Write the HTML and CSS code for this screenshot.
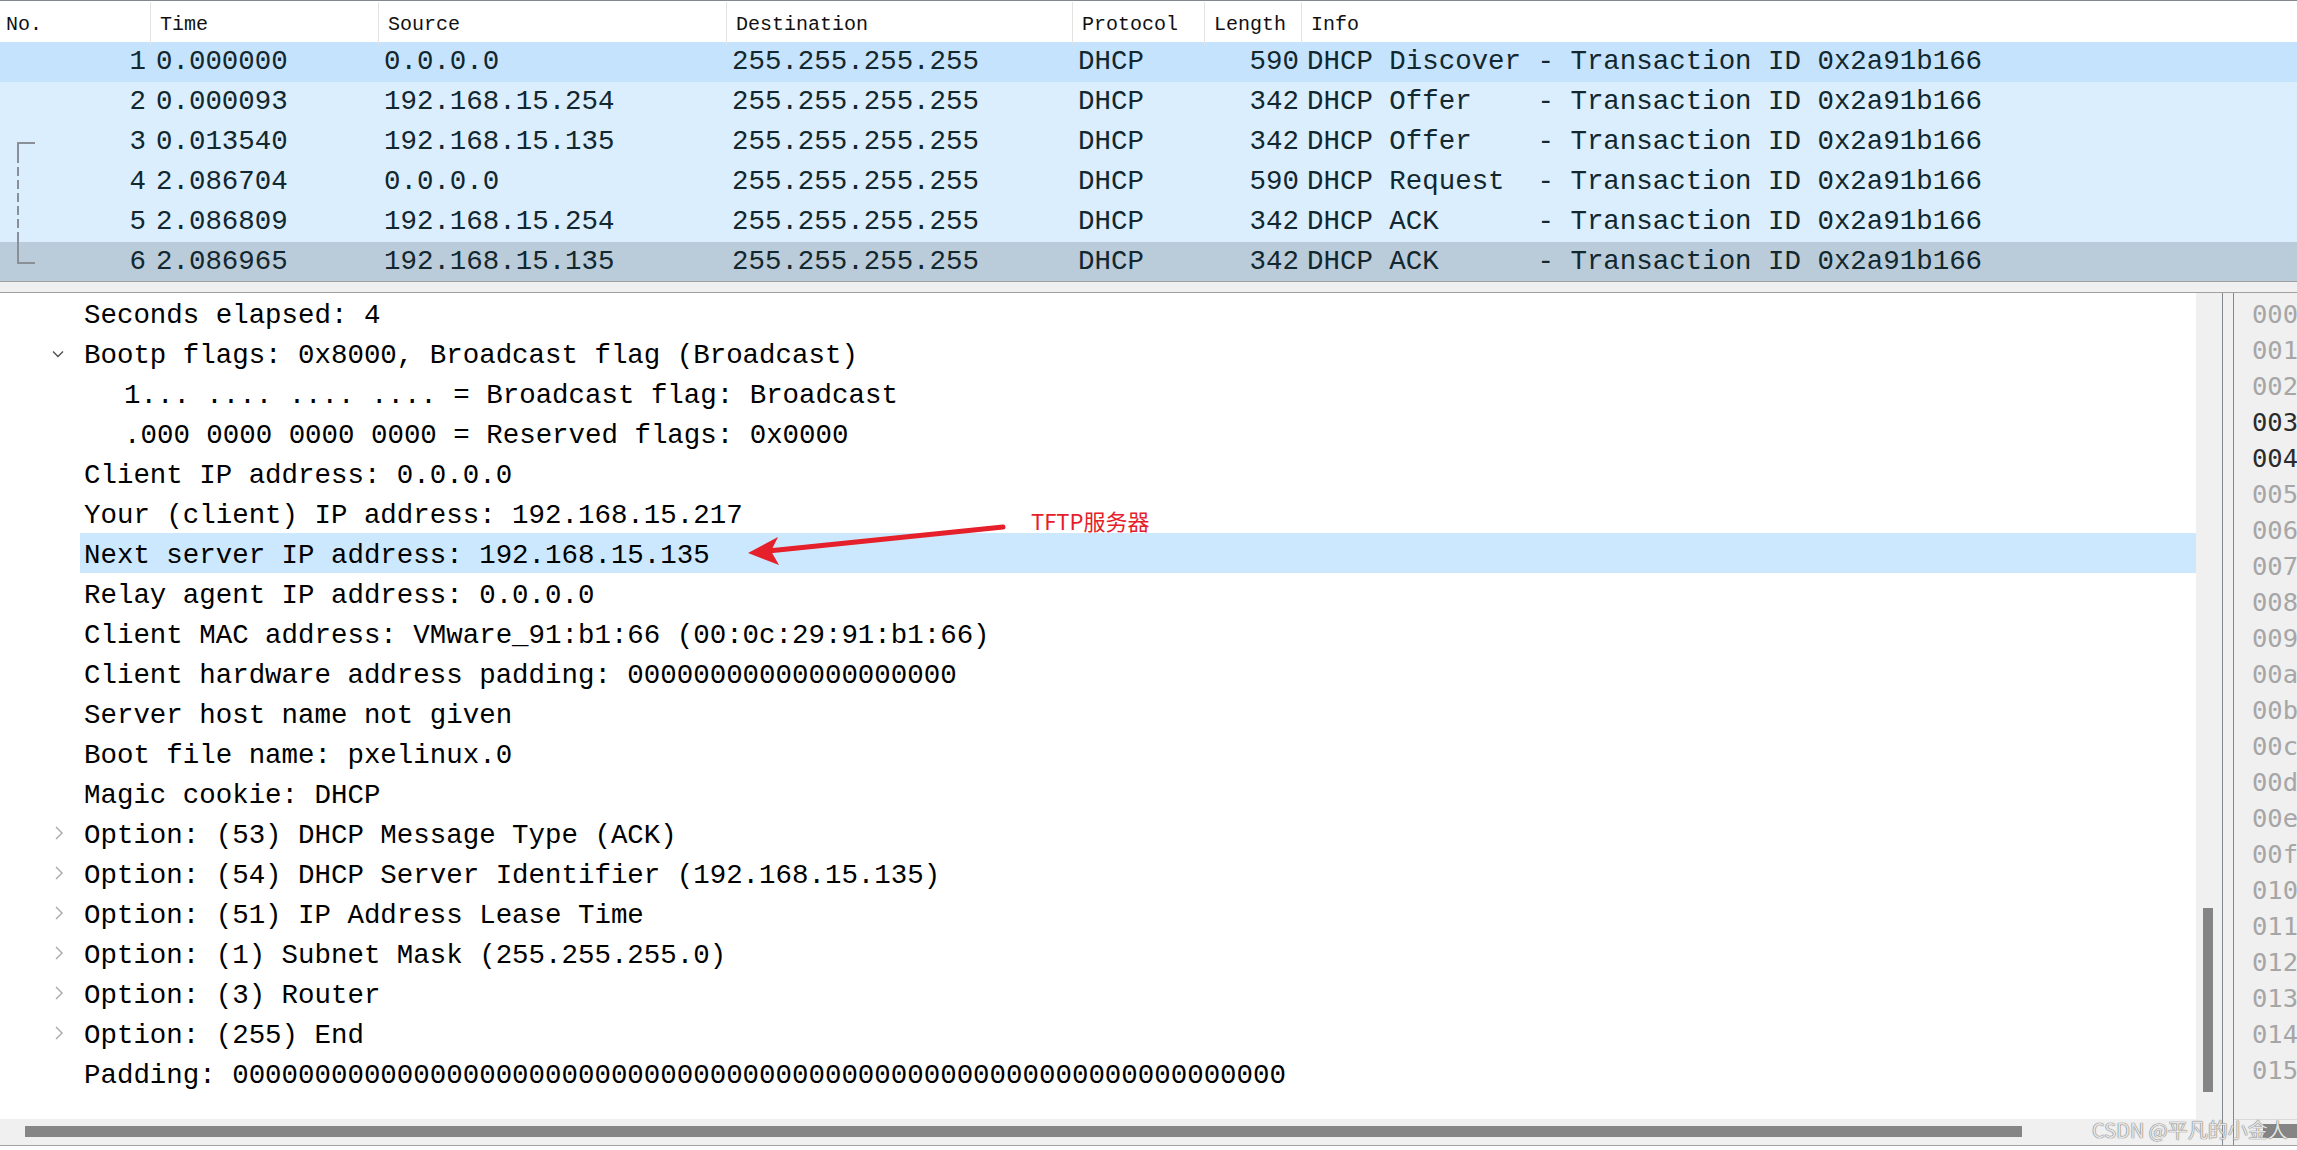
FILE: index.html
```html
<!DOCTYPE html>
<html>
<head>
<meta charset="utf-8">
<title>Wireshark DHCP</title>
<link rel="stylesheet" href="styles.css">
</head>
<body>
<div class="plist">
  <div class="phead">
    <div class="hc">No.</div>
    <div class="hc">Time</div>
    <div class="hc">Source</div>
    <div class="hc">Destination</div>
    <div class="hc">Protocol</div>
    <div class="hc">Length</div>
    <div class="hc last">Info</div>
  </div>
  <div class="prow hover">
    <div class="c r">1</div><div class="c">0.000000</div><div class="c">0.0.0.0</div><div class="c">255.255.255.255</div><div class="c">DHCP</div><div class="c rr">590</div><div class="c">DHCP Discover - Transaction ID 0x2a91b166</div>
  </div>
  <div class="prow">
    <div class="c r">2</div><div class="c">0.000093</div><div class="c">192.168.15.254</div><div class="c">255.255.255.255</div><div class="c">DHCP</div><div class="c rr">342</div><div class="c">DHCP Offer    - Transaction ID 0x2a91b166</div>
  </div>
  <div class="prow">
    <div class="c r">3</div><div class="c">0.013540</div><div class="c">192.168.15.135</div><div class="c">255.255.255.255</div><div class="c">DHCP</div><div class="c rr">342</div><div class="c">DHCP Offer    - Transaction ID 0x2a91b166</div>
  </div>
  <div class="prow">
    <div class="c r">4</div><div class="c">2.086704</div><div class="c">0.0.0.0</div><div class="c">255.255.255.255</div><div class="c">DHCP</div><div class="c rr">590</div><div class="c">DHCP Request  - Transaction ID 0x2a91b166</div>
  </div>
  <div class="prow">
    <div class="c r">5</div><div class="c">2.086809</div><div class="c">192.168.15.254</div><div class="c">255.255.255.255</div><div class="c">DHCP</div><div class="c rr">342</div><div class="c">DHCP ACK      - Transaction ID 0x2a91b166</div>
  </div>
  <div class="prow selected">
    <div class="c r">6</div><div class="c">2.086965</div><div class="c">192.168.15.135</div><div class="c">255.255.255.255</div><div class="c">DHCP</div><div class="c rr">342</div><div class="c">DHCP ACK      - Transaction ID 0x2a91b166</div>
  </div>
  <svg class="bracket" width="40" height="130" viewBox="0 0 40 130">
    <path d="M35 1 H18 V12" fill="none" stroke="#8b9096" stroke-width="2"/>
    <path d="M18 12 V98" fill="none" stroke="#8b9096" stroke-width="2" stroke-dasharray="9 4"/>
    <path d="M18 96 V121 H35" fill="none" stroke="#8b9096" stroke-width="2"/>
  </svg>
</div>
<div class="hsplit"></div>
<div class="bottom">
  <div class="dpane">
    <div class="dmain">
      <div class="tree">
        <div class="trow"><div class="branch"></div><div class="label">Seconds elapsed: 4</div></div>
        <div class="trow"><div class="branch"><svg class="chev-d" width="12" height="8" viewBox="0 0 12 8"><path d="M1 1.5 L6 6.5 L11 1.5" fill="none" stroke="#505050" stroke-width="1.4"/></svg></div><div class="label">Bootp flags: 0x8000, Broadcast flag (Broadcast)</div></div>
        <div class="trow"><div class="branch deep"></div><div class="label">1... .... .... .... = Broadcast flag: Broadcast</div></div>
        <div class="trow"><div class="branch deep"></div><div class="label">.000 0000 0000 0000 = Reserved flags: 0x0000</div></div>
        <div class="trow"><div class="branch"></div><div class="label">Client IP address: 0.0.0.0</div></div>
        <div class="trow"><div class="branch"></div><div class="label">Your (client) IP address: 192.168.15.217</div></div>
        <div class="trow"><div class="branch"></div><div class="label sel">Next server IP address: 192.168.15.135</div></div>
        <div class="trow"><div class="branch"></div><div class="label">Relay agent IP address: 0.0.0.0</div></div>
        <div class="trow"><div class="branch"></div><div class="label">Client MAC address: VMware_91:b1:66 (00:0c:29:91:b1:66)</div></div>
        <div class="trow"><div class="branch"></div><div class="label">Client hardware address padding: 00000000000000000000</div></div>
        <div class="trow"><div class="branch"></div><div class="label">Server host name not given</div></div>
        <div class="trow"><div class="branch"></div><div class="label">Boot file name: pxelinux.0</div></div>
        <div class="trow"><div class="branch"></div><div class="label">Magic cookie: DHCP</div></div>
        <div class="trow"><div class="branch"><svg class="chev-r" width="8" height="14" viewBox="0 0 8 14"><path d="M1 1 L7 7 L1 13" fill="none" stroke="#a8a8a8" stroke-width="1.4"/></svg></div><div class="label">Option: (53) DHCP Message Type (ACK)</div></div>
        <div class="trow"><div class="branch"><svg class="chev-r" width="8" height="14" viewBox="0 0 8 14"><path d="M1 1 L7 7 L1 13" fill="none" stroke="#a8a8a8" stroke-width="1.4"/></svg></div><div class="label">Option: (54) DHCP Server Identifier (192.168.15.135)</div></div>
        <div class="trow"><div class="branch"><svg class="chev-r" width="8" height="14" viewBox="0 0 8 14"><path d="M1 1 L7 7 L1 13" fill="none" stroke="#a8a8a8" stroke-width="1.4"/></svg></div><div class="label">Option: (51) IP Address Lease Time</div></div>
        <div class="trow"><div class="branch"><svg class="chev-r" width="8" height="14" viewBox="0 0 8 14"><path d="M1 1 L7 7 L1 13" fill="none" stroke="#a8a8a8" stroke-width="1.4"/></svg></div><div class="label">Option: (1) Subnet Mask (255.255.255.0)</div></div>
        <div class="trow"><div class="branch"><svg class="chev-r" width="8" height="14" viewBox="0 0 8 14"><path d="M1 1 L7 7 L1 13" fill="none" stroke="#a8a8a8" stroke-width="1.4"/></svg></div><div class="label">Option: (3) Router</div></div>
        <div class="trow"><div class="branch"><svg class="chev-r" width="8" height="14" viewBox="0 0 8 14"><path d="M1 1 L7 7 L1 13" fill="none" stroke="#a8a8a8" stroke-width="1.4"/></svg></div><div class="label">Option: (255) End</div></div>
        <div class="trow"><div class="branch"></div><div class="label">Padding: 0000000000000000000000000000000000000000000000000000000000000000</div></div>
      </div>
      <div class="vscroll"><div class="vthumb"></div></div>
    </div>
    <div class="hscroll"><div class="hthumb"></div></div>
  </div>
  <div class="vgap"></div>
  <div class="hex">
    <div class="hexlines"><div>0000</div><div>0010</div><div>0020</div><div class="on">0030</div><div class="on">0040</div><div>0050</div><div>0060</div><div>0070</div><div>0080</div><div>0090</div><div>00a0</div><div>00b0</div><div>00c0</div><div>00d0</div><div>00e0</div><div>00f0</div><div>0100</div><div>0110</div><div>0120</div><div>0130</div><div>0140</div><div>0150</div></div>
    <div class="hexbar"><div class="hexthumb"></div></div>
  </div>
</div>

<svg class="arrow" width="2297" height="1150" viewBox="0 0 2297 1150">
  <line x1="1003" y1="527" x2="768" y2="551" stroke="#e5202a" stroke-width="5" stroke-linecap="round"/>
  <polygon points="748,553 778,537 771,551 779,565" fill="#e5202a"/>
</svg>
<div class="note">TFTP服务器</div>
<div class="watermark">CSDN @平凡的小金人</div>
</body>
</html>
```
FILE: styles.css
```css
* { box-sizing: border-box; margin: 0; padding: 0; }
html, body { width: 2297px; height: 1150px; overflow: hidden; background: #fff; }
body { position: relative; font-family: "Liberation Mono", "DejaVu Sans Mono", monospace; color: #000; }

/* packet list */
.plist { position: relative; height: 281px; overflow: hidden; border-top: 1px solid #828790; }
.phead, .prow { display: grid; grid-template-columns: 151px 228px 348px 346px 132px 97px 1fr; }
.phead { height: 41px; background: #fff; }
.hc { font-family: "Liberation Mono", monospace; font-size: 20px; line-height: 41px; padding: 2px 0 0 9px; border-right: 1px solid #e3e3e3; margin-top: 1px; color: #111; white-space: nowrap; }
.hc:first-child { padding-left: 6px; }
.hc.last { border-right: none; }
.prow { height: 40px; line-height: 40px; font-size: 27.45px; color: #12272e; background: #daeefe; white-space: pre; }
.prow.hover { background: #c6e3fd; }
.prow.selected { background: #bacbda; }
.c { padding-left: 5px; overflow: hidden; }
.c.r { text-align: right; padding: 0 5px 0 0; }
.c.rr { text-align: right; padding: 0 3px 0 0; }
.bracket { position: absolute; left: 0; top: 141px; }

/* splitter */
.hsplit { height: 12px; background: #f0f0f0; border-top: 1px solid #a0a0a0; border-bottom: 1px solid #a0a0a0; }

/* bottom panes */
.bottom { display: flex; height: 853px; border-bottom: 1px solid #a0a0a0; }
.dpane { width: 2223px; display: flex; flex-direction: column; border-right: 1px solid #828790; }
.dmain { display: flex; height: 826px; }
.tree { flex: 1; background: #fff; overflow: hidden; font-size: 27.45px; }
.trow { display: flex; height: 40px; line-height: 40px; white-space: pre; }
.branch { width: 80px; flex: none; display: flex; align-items: center; }
.branch.deep { width: 120px; }
.chev-d { margin-left: 52px; margin-top: 1px; }
.chev-r { margin-left: 55px; }
.label { flex: 1; padding: 3px 0 0 4px; color: #000; }
.label.sel { background: #cce8ff; }
.vscroll { width: 26px; background: #f0f0f0; }
.vthumb { margin: 615px 0 0 7px; width: 10px; height: 184px; background: #858585; }
.hscroll { height: 26px; background: #f0f0f0; }
.hthumb { margin: 7px 0 0 25px; width: 1997px; height: 11px; background: #868686; }
.vgap { width: 10px; background: #f0f0f0; }
.hex { flex: 1; display: flex; flex-direction: column; background: #f0f0f0; border-left: 1px solid #828790; overflow: hidden; }
.hexlines { flex: 1; padding: 3px 0 0 18px; font-family: "DejaVu Sans Mono", monospace; font-size: 25.5px; line-height: 36px; color: #a6a6a6; white-space: pre; overflow: hidden; }
.hexlines .on { color: #2b2b2b; }
.hexbar { height: 26px; border-top: 1px solid #dadada; }
.hexthumb { margin: 4px 0 0 29px; width: 40px; height: 14px; background: #858585; }

/* annotation overlay */
.arrow { position: absolute; left: 0; top: 0; pointer-events: none; }
.note { position: absolute; left: 1031px; top: 508px; font-family: "Noto Sans CJK SC", sans-serif; font-size: 22px; line-height: 24px; color: #e5202a; }
.watermark { position: absolute; left: 2092px; top: 1117px; font-family: "Noto Sans CJK SC", sans-serif; font-size: 20px; line-height: 26px; color: #e4e4e4; text-shadow: 0 0 1px #6e6e6e, 0 0 1px #6e6e6e; white-space: nowrap; }
```
